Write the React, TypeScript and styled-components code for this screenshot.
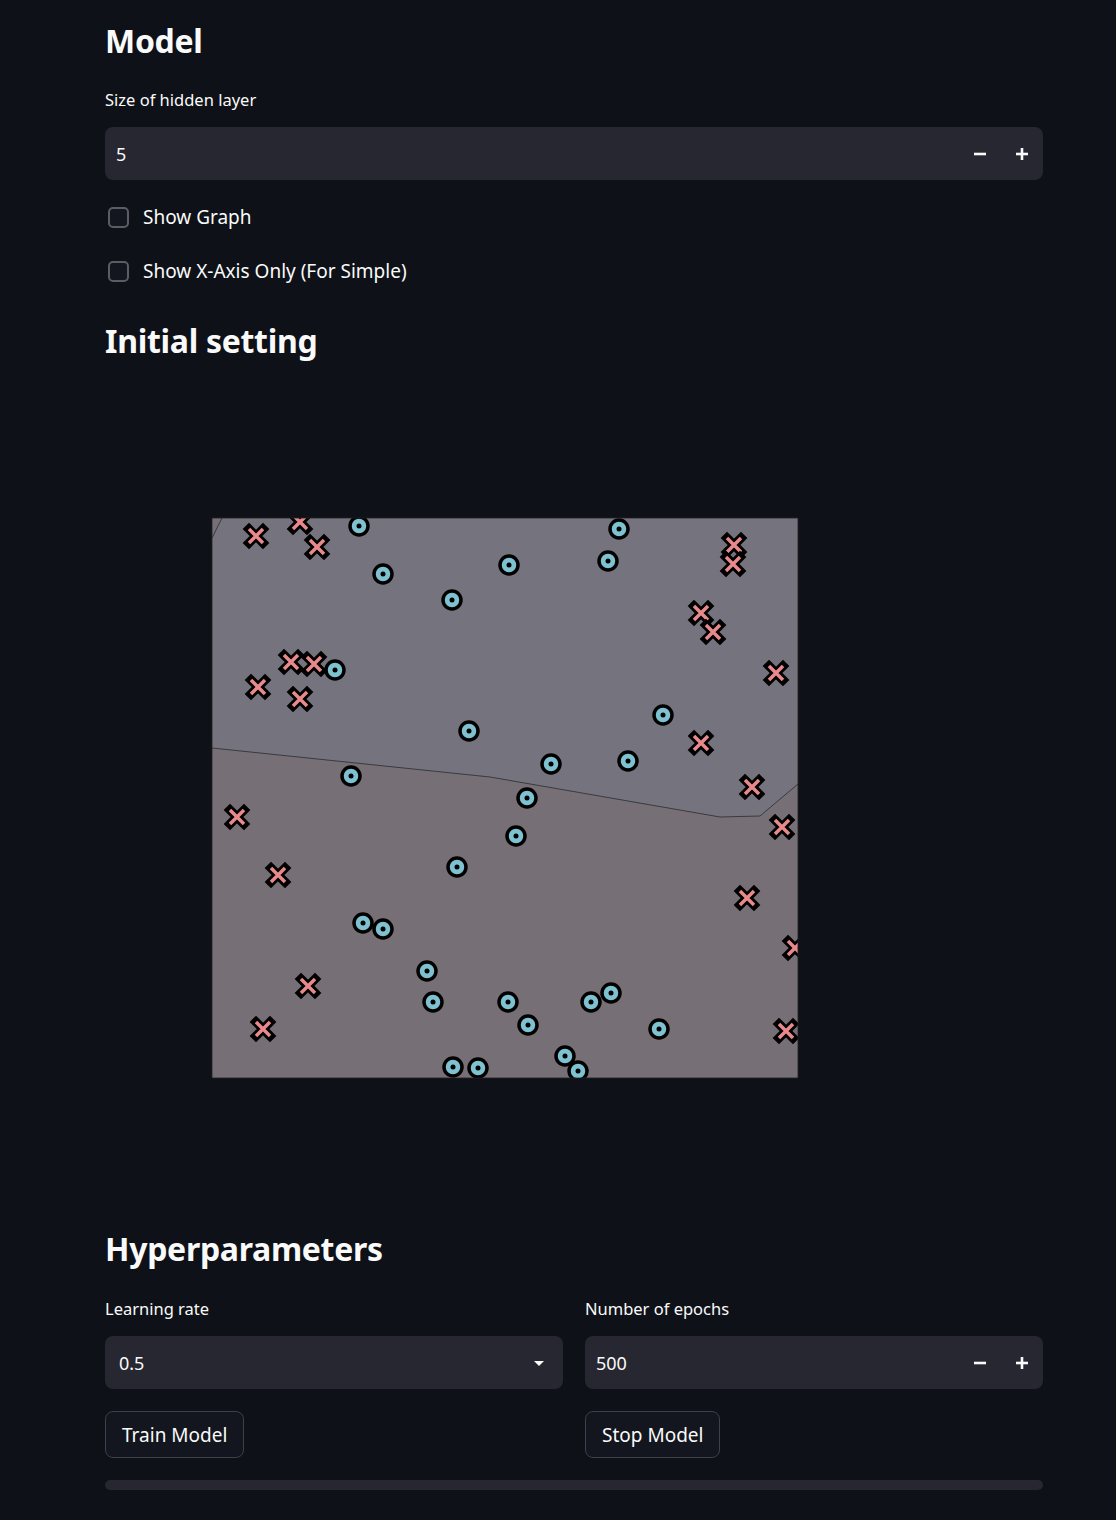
import React from 'react';
import styled, { createGlobalStyle } from 'styled-components';

const GlobalStyle = createGlobalStyle`
  body {
    margin: 0;
    background: #0e1117;
    color: #fafafa;
    font-family: "Source Sans Pro", "Noto Sans", sans-serif;
  }
`;

const Page = styled.div`
  width: 938px;
  margin: 0 0 0 105px;
  padding: 18px 0 30px;
  display: flex;
  flex-direction: column;
`;

const Heading = styled.h2<{ top?: number }>`
  margin: ${(p) => p.top || 0}px 0 0;
  font-size: 32px;
  font-weight: 700;
  line-height: 46px;
  letter-spacing: -0.3px;
`;

const Label = styled.div`
  font-size: 16.5px;
  line-height: 22px;
  margin-bottom: 16px;
`;

const Field = styled.div<{ top?: number }>`
  margin-top: ${(p) => p.top || 0}px;
  display: flex;
  flex-direction: column;
`;

const InputBox = styled.div`
  height: 53px;
  background: #262730;
  border-radius: 8px;
  display: flex;
  align-items: center;
  padding: 0 0 0 11px;
  font-size: 18px;
`;

const SelectBox = styled(InputBox)`
  padding: 0 17px 0 14px;
`;

const Value = styled.span`
  flex: 1;
`;

const Step = styled.span`
  width: 42px;
  height: 100%;
  display: flex;
  align-items: center;
  justify-content: center;
`;

const CheckRow = styled.label<{ top?: number }>`
  display: flex;
  align-items: center;
  gap: 14px;
  margin-top: ${(p) => p.top || 0}px;
  padding-left: 3px;
  font-size: 19px;
  height: 28px;
`;

const Box = styled.span`
  width: 17px;
  height: 17px;
  border: 2px solid #5b5d66;
  border-radius: 5px;
  background: #13161f;
`;

const PlotArea = styled.div`
  height: 862px;
  box-sizing: border-box;
  display: flex;
  align-items: flex-start;
  padding: 153px 0 0 106px;
`;

const Columns = styled.div`
  display: grid;
  grid-template-columns: 1fr 1fr;
  column-gap: 22px;
  margin-top: 26px;
`;

const Col = styled.div`
  display: flex;
  flex-direction: column;
  align-items: flex-start;
`;

const Full = styled.div`
  width: 100%;
  display: flex;
  flex-direction: column;
`;

const Button = styled.button`
  margin-top: 22px;
  height: 47px;
  padding: 0 16px;
  background: #13161e;
  color: #fafafa;
  border: 1px solid #3d3f49;
  border-radius: 8px;
  font-family: inherit;
  font-size: 19px;
`;

const Progress = styled.div`
  margin-top: 22px;
  height: 10px;
  border-radius: 5px;
  background: #262730;
`;

const Minus = () => (
  <svg width="14" height="14" viewBox="0 0 14 14">
    <rect x="1" y="5.7" width="12" height="2.6" fill="#fafafa" />
  </svg>
);

const Plus = () => (
  <svg width="14" height="14" viewBox="0 0 14 14">
    <rect x="1" y="5.7" width="12" height="2.6" fill="#fafafa" />
    <rect x="5.7" y="1" width="2.6" height="12" fill="#fafafa" />
  </svg>
);

const Caret = () => (
  <svg width="14" height="14" viewBox="0 0 14 14">
    <path d="M2 5 L12 5 L7 10 Z" fill="#fafafa" />
  </svg>
);

// marker positions in page pixels, shifted into the axes box below
const crosses: [number, number][] = [
  [256, 536], [300, 522], [317, 547], [734, 545], [733, 564], [701, 613], [713, 632],
  [776, 673], [291, 662], [314, 664], [258, 687], [300, 699], [701, 743], [752, 787],
  [237, 817], [782, 827], [278, 875], [747, 898], [795, 948], [308, 986], [263, 1029],
  [786, 1031],
];

const circles: [number, number][] = [
  [359, 526], [619, 529], [383, 574], [509, 565], [608, 561], [452, 600], [335, 670],
  [663, 715], [469, 731], [551, 764], [628, 761], [351, 776], [527, 798], [516, 836],
  [457, 867], [363, 923], [383, 929], [427, 971], [433, 1002], [508, 1002], [528, 1025],
  [591, 1002], [611, 993], [659, 1029], [453, 1067], [478, 1068], [565, 1056], [578, 1071],
];

const OX = 212;
const OY = 518;

const Plot = () => {
  const boundary = [
    [0, 230], [278, 259], [508, 299], [548, 298], [586, 266],
  ];
  const line = boundary.map((p) => p.join(',')).join(' ');
  const lower = `${line} 586,560 0,560`;
  return (
    <svg width="588" height="562" viewBox="-1 -1 588 562">
      <defs>
        <clipPath id="axes">
          <rect x="0" y="0" width="586" height="560" />
        </clipPath>
      </defs>
      <g clipPath="url(#axes)">
        <rect x="0" y="0" width="586" height="560" fill="#75737d" />
        <polygon points={lower} fill="#776f76" />
        <polygon points="0,0 10,0 0,20" fill="#776f76" />
        <polyline points={line} fill="none" stroke="#3a3a40" strokeWidth="1" />
        <line x1="0" y1="20" x2="10" y2="0" stroke="#3a3a40" strokeWidth="1" />
        {crosses.map(([x, y], i) => {
          const cx = x - OX;
          const cy = y - OY;
          const d = `M${cx - 7},${cy - 7} L${cx + 7},${cy + 7} M${cx + 7},${cy - 7} L${cx - 7},${cy + 7}`;
          return (
            <g key={'x' + i}>
              <path d={d} stroke="#000" strokeWidth="9" strokeLinecap="square" />
              <path d={d} stroke="#e8898b" strokeWidth="3.5" strokeLinecap="butt" />
            </g>
          );
        })}
        {circles.map(([x, y], i) => (
          <g key={'o' + i}>
            <circle cx={x - OX} cy={y - OY} r="9" fill="#7ec1d1" stroke="#000" strokeWidth="3.5" />
            <circle cx={x - OX} cy={y - OY} r="2.5" fill="#000" />
          </g>
        ))}
      </g>
      <rect x="0" y="0" width="586" height="560" fill="none" stroke="#222" strokeWidth="0.8" />
    </svg>
  );
};

export default function App() {
  return (
    <>
      <GlobalStyle />
      <Page>
        <Heading>Model</Heading>
        <Field top={25}>
          <Label>Size of hidden layer</Label>
          <InputBox>
            <Value>5</Value>
            <Step><Minus /></Step>
            <Step><Plus /></Step>
          </InputBox>
        </Field>
        <CheckRow top={23}>
          <Box />
          Show Graph
        </CheckRow>
        <CheckRow top={26}>
          <Box />
          Show X-Axis Only (For Simple)
        </CheckRow>
        <Heading top={33}>Initial setting</Heading>
        <PlotArea>
          <Plot />
        </PlotArea>
        <Heading>Hyperparameters</Heading>
        <Columns>
          <Col>
            <Full>
              <Label>Learning rate</Label>
              <SelectBox>
                <Value>0.5</Value>
                <Caret />
              </SelectBox>
            </Full>
            <Button>Train Model</Button>
          </Col>
          <Col>
            <Full>
              <Label>Number of epochs</Label>
              <InputBox>
                <Value>500</Value>
                <Step><Minus /></Step>
                <Step><Plus /></Step>
              </InputBox>
            </Full>
            <Button>Stop Model</Button>
          </Col>
        </Columns>
        <Progress />
      </Page>
    </>
  );
}
